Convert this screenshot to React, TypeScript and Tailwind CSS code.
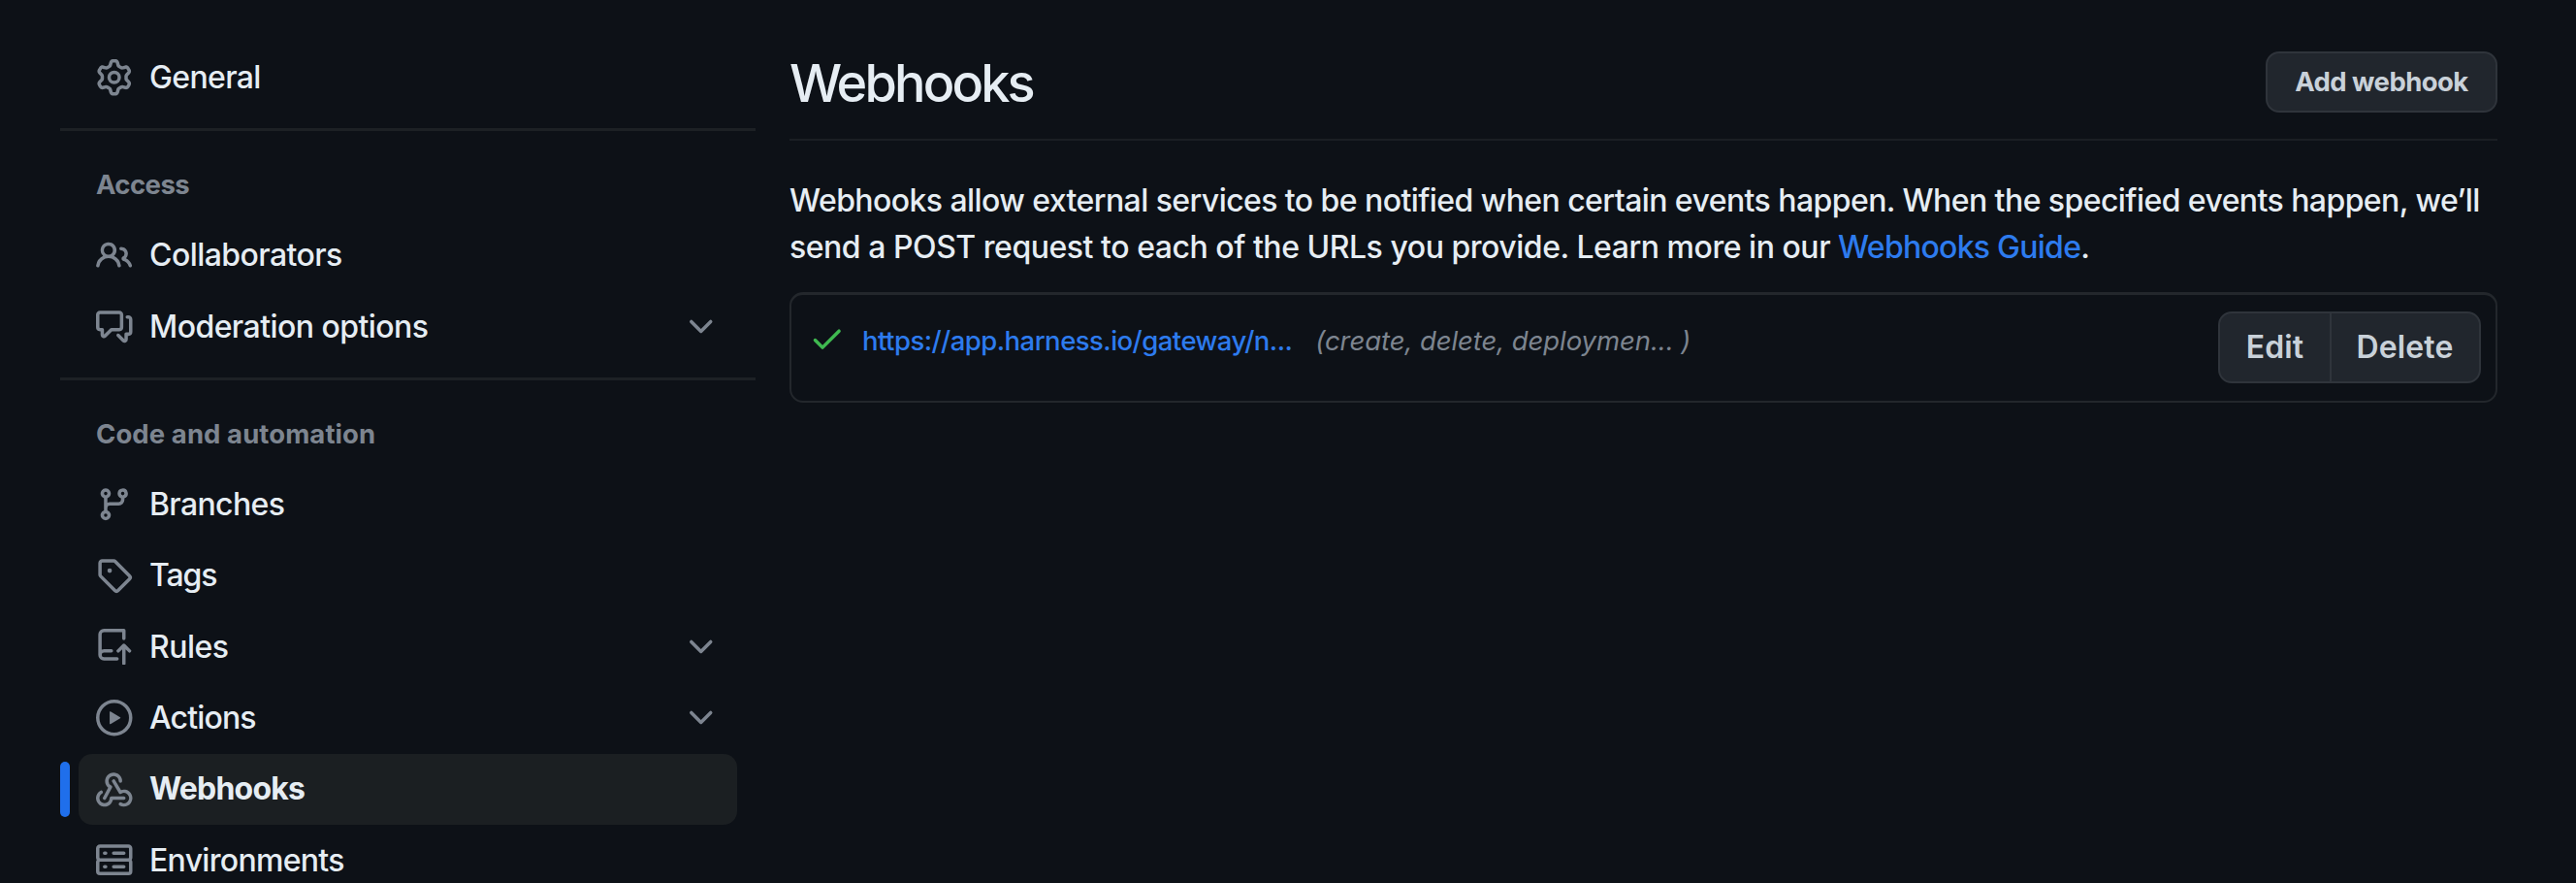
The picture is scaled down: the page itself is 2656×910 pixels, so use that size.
import type { ReactNode } from "react";

const icons: Record<string, string[]> = {
  gear: [
    "M8 0a8.2 8.2 0 0 1 .701.031C9.444.095 9.99.645 10.16 1.29l.288 1.107c.018.066.079.158.212.224.231.114.454.243.668.386.123.082.233.09.299.071l1.103-.303c.644-.176 1.392.021 1.82.63.27.385.506.792.704 1.218.315.675.111 1.422-.364 1.891l-.814.806c-.049.048-.098.147-.088.294.016.257.016.515 0 .772-.01.147.038.246.088.294l.814.806c.475.469.679 1.216.364 1.891a7.977 7.977 0 0 1-.704 1.217c-.428.61-1.176.807-1.82.63l-1.102-.302c-.067-.019-.177-.011-.3.071a5.909 5.909 0 0 1-.668.386c-.133.066-.194.158-.211.224l-.29 1.106c-.168.646-.715 1.196-1.458 1.26a8.006 8.006 0 0 1-1.402 0c-.743-.064-1.289-.614-1.458-1.26l-.289-1.106c-.018-.066-.079-.158-.212-.224a5.738 5.738 0 0 1-.668-.386c-.123-.082-.233-.09-.299-.071l-1.103.303c-.644.176-1.392-.021-1.82-.63a8.12 8.12 0 0 1-.704-1.218c-.315-.675-.111-1.422.363-1.891l.815-.806c.05-.048.098-.147.088-.294a6.214 6.214 0 0 1 0-.772c.01-.147-.038-.246-.088-.294l-.815-.806C.635 6.045.431 5.298.746 4.623a7.92 7.92 0 0 1 .704-1.217c.428-.61 1.176-.807 1.82-.63l1.102.302c.067.019.177.011.3-.071.214-.143.437-.272.668-.386.133-.066.194-.158.211-.224l.29-1.106C6.009.645 6.556.095 7.299.03 7.53.01 7.764 0 8 0Zm-.571 1.525c-.036.003-.108.036-.137.146l-.289 1.105c-.147.561-.549.967-.998 1.189-.173.086-.34.183-.5.29-.417.278-.97.423-1.529.27l-1.103-.303c-.109-.03-.175.016-.195.045-.22.312-.412.644-.573.99-.014.031-.021.11.059.19l.815.806c.411.406.562.957.53 1.456a4.709 4.709 0 0 0 0 .582c.032.499-.119 1.05-.53 1.456l-.815.806c-.081.08-.073.159-.059.19.162.346.353.677.573.989.02.03.085.076.195.046l1.102-.303c.56-.153 1.113-.008 1.53.27.161.107.328.204.501.29.447.222.85.629.997 1.189l.289 1.105c.029.109.101.143.137.146a6.6 6.6 0 0 0 1.142 0c.036-.003.108-.036.137-.146l.289-1.105c.147-.561.549-.967.998-1.189.173-.086.34-.183.5-.29.417-.278.97-.423 1.529-.27l1.103.303c.109.029.175-.016.195-.045.22-.313.411-.644.573-.99.014-.031.021-.11-.059-.19l-.815-.806c-.411-.406-.562-.957-.53-1.456a4.709 4.709 0 0 0 0-.582c-.032-.499.119-1.05.53-1.456l.815-.806c.081-.08.073-.159.059-.19a6.464 6.464 0 0 0-.573-.989c-.02-.03-.085-.076-.195-.046l-1.102.303c-.56.153-1.113.008-1.53-.27a4.44 4.44 0 0 0-.501-.29c-.447-.222-.85-.629-.997-1.189l-.289-1.105c-.029-.11-.101-.143-.137-.146a6.6 6.6 0 0 0-1.142 0ZM11 8a3 3 0 1 1-6 0 3 3 0 0 1 6 0ZM9.5 8a1.5 1.5 0 1 0-3.001.001A1.5 1.5 0 0 0 9.5 8Z",
  ],
  people: [
    "M2 5.5a3.5 3.5 0 1 1 5.898 2.549 5.508 5.508 0 0 1 3.034 4.084.75.75 0 1 1-1.482.235 4 4 0 0 0-7.9 0 .75.75 0 0 1-1.482-.236A5.507 5.507 0 0 1 3.102 8.05 3.493 3.493 0 0 1 2 5.5ZM11 4a3.001 3.001 0 0 1 2.22 5.018 5.01 5.01 0 0 1 2.56 3.012.749.749 0 0 1-.885.954.752.752 0 0 1-.549-.514 3.507 3.507 0 0 0-2.522-2.372.75.75 0 0 1-.574-.73v-.352a.75.75 0 0 1 .416-.672A1.5 1.5 0 0 0 11 5.5.75.75 0 0 1 11 4Zm-5.5-.5a2 2 0 1 0-.001 3.999A2 2 0 0 0 5.5 3.5Z",
  ],
  discussion: [
    "M1.75 1h8.5c.966 0 1.75.784 1.75 1.75v5.5A1.75 1.75 0 0 1 10.25 10H7.061l-2.574 2.573A1.458 1.458 0 0 1 2 11.543V10h-.25A1.75 1.75 0 0 1 0 8.25v-5.5C0 1.784.784 1 1.75 1ZM1.5 2.75v5.5c0 .138.112.25.25.25h1a.75.75 0 0 1 .75.75v2.19l2.72-2.72a.749.749 0 0 1 .53-.22h3.5a.25.25 0 0 0 .25-.25v-5.5a.25.25 0 0 0-.25-.25h-8.5a.25.25 0 0 0-.25.25Zm13 2a.25.25 0 0 0-.25-.25h-.5a.75.75 0 0 1 0-1.5h.5c.966 0 1.75.784 1.75 1.75v5.5A1.75 1.75 0 0 1 14.25 12H14v1.543a1.458 1.458 0 0 1-2.487 1.03L9.22 12.28a.749.749 0 0 1 .326-1.275.749.749 0 0 1 .734.215l2.22 2.22v-2.19a.75.75 0 0 1 .75-.75h1a.25.25 0 0 0 .25-.25Z",
  ],
  branch: [
    "M9.5 3.25a2.25 2.25 0 1 1 3 2.122V6A2.5 2.5 0 0 1 10 8.5H6a1 1 0 0 0-1 1v1.128a2.251 2.251 0 1 1-1.5 0V5.372a2.25 2.25 0 1 1 1.5 0v1.836A2.493 2.493 0 0 1 6 7h4a1 1 0 0 0 1-1v-.628A2.25 2.25 0 0 1 9.5 3.25Zm-6 0a.75.75 0 1 0 1.5 0 .75.75 0 0 0-1.5 0Zm8.25-.75a.75.75 0 1 0 0 1.5.75.75 0 0 0 0-1.5ZM4.25 12a.75.75 0 1 0 0 1.5.75.75 0 0 0 0-1.5Z",
  ],
  tag: [
    "M1 7.775V2.75C1 1.784 1.784 1 2.75 1h5.025c.464 0 .91.184 1.238.513l6.25 6.25a1.75 1.75 0 0 1 0 2.474l-5.026 5.026a1.75 1.75 0 0 1-2.474 0l-6.25-6.25A1.752 1.752 0 0 1 1 7.775Zm1.5 0c0 .066.026.13.073.177l6.25 6.25a.25.25 0 0 0 .354 0l5.025-5.025a.25.25 0 0 0 0-.354l-6.25-6.25a.25.25 0 0 0-.177-.073H2.75a.25.25 0 0 0-.25.25ZM6 5a1 1 0 1 1 0 2 1 1 0 0 1 0-2Z",
  ],
  repoPush: [
    "M1 2.5A2.5 2.5 0 0 1 3.5 0h8.75a.75.75 0 0 1 .75.75v3.5a.75.75 0 0 1-1.5 0V1.5h-8a1 1 0 0 0-1 1v6.708A2.493 2.493 0 0 1 3.5 9h3.25a.75.75 0 0 1 0 1.5H3.5a1 1 0 0 0 0 2h5.75a.75.75 0 0 1 0 1.5H3.5A2.5 2.5 0 0 1 1 11.5Zm13.23 7.79h-.001l-1.224-1.224v6.184a.75.75 0 0 1-1.5 0V9.066L10.28 10.29a.75.75 0 0 1-1.06-1.061l2.505-2.504a.75.75 0 0 1 1.06 0L15.29 9.23a.751.751 0 0 1-.018 1.042.751.751 0 0 1-1.042.018Z",
  ],
  play: [
    "M8 0a8 8 0 1 1 0 16A8 8 0 0 1 8 0ZM1.5 8a6.5 6.5 0 1 0 13 0 6.5 6.5 0 0 0-13 0Zm4.879-2.773 4.264 2.559a.25.25 0 0 1 0 .428l-4.264 2.559A.25.25 0 0 1 6 10.559V5.442a.25.25 0 0 1 .379-.215Z",
  ],
  webhook: [
    "M5.5 4.25a2.25 2.25 0 0 1 4.5 0 .75.75 0 0 0 1.5 0 3.75 3.75 0 1 0-6.14 2.889l-2.272 4.258a.75.75 0 0 0 1.324.706L7 7.25a.75.75 0 0 0-.309-1.015A2.25 2.25 0 0 1 5.5 4.25Z",
    "M7.364 3.607a.75.75 0 0 1 1.03.257l2.608 4.349a3.75 3.75 0 1 1-.628 6.785.75.75 0 0 1 .752-1.299 2.25 2.25 0 1 0-.033-3.88.75.75 0 0 1-1.03-.256L7.107 4.636a.75.75 0 0 1 .257-1.03Z",
    "M2.9 8.776A.75.75 0 0 1 2.625 9.8 2.25 2.25 0 1 0 6 11.75a.75.75 0 0 1 .75-.751h5.5a.75.75 0 0 1 0 1.5H7.425a3.751 3.751 0 1 1-5.55-3.998.75.75 0 0 1 1.024.274Z",
  ],
  server: [
    "M1.75 1h12.5c.966 0 1.75.784 1.75 1.75v4c0 .372-.116.717-.314 1 .198.283.314.628.314 1v4a1.75 1.75 0 0 1-1.75 1.75H1.75A1.75 1.75 0 0 1 0 12.75v-4c0-.358.109-.707.314-1a1.739 1.739 0 0 1-.314-1v-4C0 1.784.784 1 1.75 1ZM1.5 2.75v4c0 .138.112.25.25.25h12.5a.25.25 0 0 0 .25-.25v-4a.25.25 0 0 0-.25-.25H1.75a.25.25 0 0 0-.25.25Zm.25 5.75a.25.25 0 0 0-.25.25v4c0 .138.112.25.25.25h12.5a.25.25 0 0 0 .25-.25v-4a.25.25 0 0 0-.25-.25ZM7 4.75A.75.75 0 0 1 7.75 4h4.5a.75.75 0 0 1 0 1.5h-4.5A.75.75 0 0 1 7 4.75ZM7.75 10h4.5a.75.75 0 0 1 0 1.5h-4.5a.75.75 0 0 1 0-1.5ZM3 4.75A.75.75 0 0 1 3.75 4h.5a.75.75 0 0 1 0 1.5h-.5A.75.75 0 0 1 3 4.75ZM3.75 10h.5a.75.75 0 0 1 0 1.5h-.5a.75.75 0 0 1 0-1.5Z",
  ],
  chevron: [
    "M12.78 5.22a.749.749 0 0 1 0 1.06l-4.25 4.25a.749.749 0 0 1-1.06 0L3.22 6.28a.749.749 0 1 1 1.06-1.06L8 8.939l3.72-3.719a.749.749 0 0 1 1.06 0Z",
  ],
  check: [
    "M13.78 4.22a.75.75 0 0 1 0 1.06l-7.25 7.25a.75.75 0 0 1-1.06 0L2.22 9.28a.751.751 0 0 1 .018-1.042.751.751 0 0 1 1.042-.018L6 10.94l6.72-6.72a.75.75 0 0 1 1.06 0Z",
  ],
};

function Icon({ name, className = "" }: { name: string; className?: string }) {
  return (
    <svg viewBox="0 0 16 16" fill="currentColor" aria-hidden="true" className={`size-[37.5px] shrink-0 ${className}`}>
      {icons[name].map((d) => (
        <path key={d} d={d} />
      ))}
    </svg>
  );
}

interface NavItemProps {
  icon: string;
  label: string;
  tracking: string;
  expandable?: boolean;
  active?: boolean;
}

function NavItem({ icon, label, tracking, expandable, active }: NavItemProps) {
  return (
    <li className="flex h-[73.4px] items-center">
      <span className={`h-[57px] w-[10px] rounded-[5px] ${active ? "bg-[#1f6feb]" : ""}`} />
      <a
        href="#"
        className={`ml-[8.5px] flex h-full w-[679.5px] items-center rounded-[14px] pr-[19px] pl-[18.5px] ${active ? "bg-[#1b1f22]" : ""}`}
      >
        <Icon name={icon} className="text-[#7d8590]" />
        <span
          className={`ml-[17.5px] flex-1 text-[32px] whitespace-nowrap text-[#e6edf3] ${tracking} ${active ? "font-bold" : "font-medium"}`}
        >
          {label}
        </span>
        {expandable && <Icon name="chevron" className="text-[#7d8590]" />}
      </a>
    </li>
  );
}

function Group({ title, tracking, children }: { title: string; tracking: string; children: ReactNode }) {
  return (
    <section className="mt-[15.2px] border-t-[3px] border-[#1d2125]">
      <h3 className={`flex h-[91.6px] items-center pt-5 pl-[37px] text-[27.5px] font-bold text-[#7d8590] ${tracking}`}>
        {title}
      </h3>
      <ul>{children}</ul>
    </section>
  );
}

export default function App() {
  return (
    <div className="flex h-[910px] w-[2656px] overflow-hidden bg-[#0d1117] pl-[62px] font-['Inter',sans-serif] text-[#e6edf3]">
      <nav className="w-[717px] shrink-0 pt-[43.4px]">
        <ul>
          <NavItem icon="gear" label="General" tracking="tracking-[-0.65px]" />
        </ul>
        <Group title="Access" tracking="tracking-[-0.55px]">
          <NavItem icon="people" label="Collaborators" tracking="tracking-[-0.57px]" />
          <NavItem icon="discussion" label="Moderation options" tracking="tracking-[-0.56px]" expandable />
        </Group>
        <Group title="Code and automation" tracking="tracking-[0.08px]">
          <NavItem icon="branch" label="Branches" tracking="tracking-[-0.65px]" />
          <NavItem icon="tag" label="Tags" tracking="tracking-[-1.1px]" />
          <NavItem icon="repoPush" label="Rules" tracking="tracking-[-0.5px]" expandable />
          <NavItem icon="play" label="Actions" tracking="tracking-[-0.85px]" expandable />
          <NavItem icon="webhook" label="Webhooks" tracking="tracking-[-0.8px]" active />
          <NavItem icon="server" label="Environments" tracking="tracking-[-0.7px]" />
        </Group>
      </nav>

      <main className="ml-[35px] w-[1761px] shrink-0">
        <header className="flex h-[145px] items-center justify-between border-b-2 border-[#1b1f24] pt-[26px]">
          <h1 className="pt-[2px] text-[54px] leading-[60px] font-medium tracking-[-2.85px]">Webhooks</h1>
          <button className="mb-[1px] flex h-[63px] w-[239px] items-center justify-center rounded-[14px] border-2 border-[#2f343b] bg-[#21262d] pt-[2px] text-[27.5px] font-bold tracking-[-0.55px] text-[#c9d1d9]">
            Add webhook
          </button>
        </header>

        <p className="mt-[38.4px] text-[32px] leading-[47.2px] font-medium whitespace-nowrap">
          <span className="tracking-[-0.575px]">
            Webhooks allow external services to be notified when certain events happen. When the specified events
            happen, we’ll
          </span>
          <br />
          <span className="tracking-[-0.47px]">send a POST request to each of the URLs you provide. Learn more in our </span>
          <a href="#" className="tracking-[-0.74px] text-[#2d7bee]">
            Webhooks Guide
          </a>
          .
        </p>

        <div className="mt-[23.6px] flex h-[113.5px] rounded-[14px] border-2 border-t-[3px] border-[#23272c] pr-[15px] pl-[18px]">
          <Icon name="check" className="mt-[25.5px] text-[#3fb950]" />
          <a href="#" className="mt-[27px] ml-[17.5px] text-[27.5px] leading-[40px] font-medium tracking-[-0.53px] text-[#2d7bee]">
            https://app.harness.io/gateway/n...
          </a>
          <em className="mt-[27px] ml-[24px] text-[27.5px] leading-[40px] tracking-[-0.07px] text-[#7d8590]">
            (create, delete, deploymen... )
          </em>
          <div className="mt-[17px] ml-auto flex h-[74px] w-[271px] rounded-[14px] border-2 border-[#2f343b] bg-[#21262d] text-[32px] font-semibold text-[#c9d1d9]">
            <button className="w-[115px] border-r-2 border-[#2f343b] tracking-[0.09px]">Edit</button>
            <button className="flex-1 pr-[1px] tracking-[0.1px]">Delete</button>
          </div>
        </div>
      </main>
    </div>
  );
}
